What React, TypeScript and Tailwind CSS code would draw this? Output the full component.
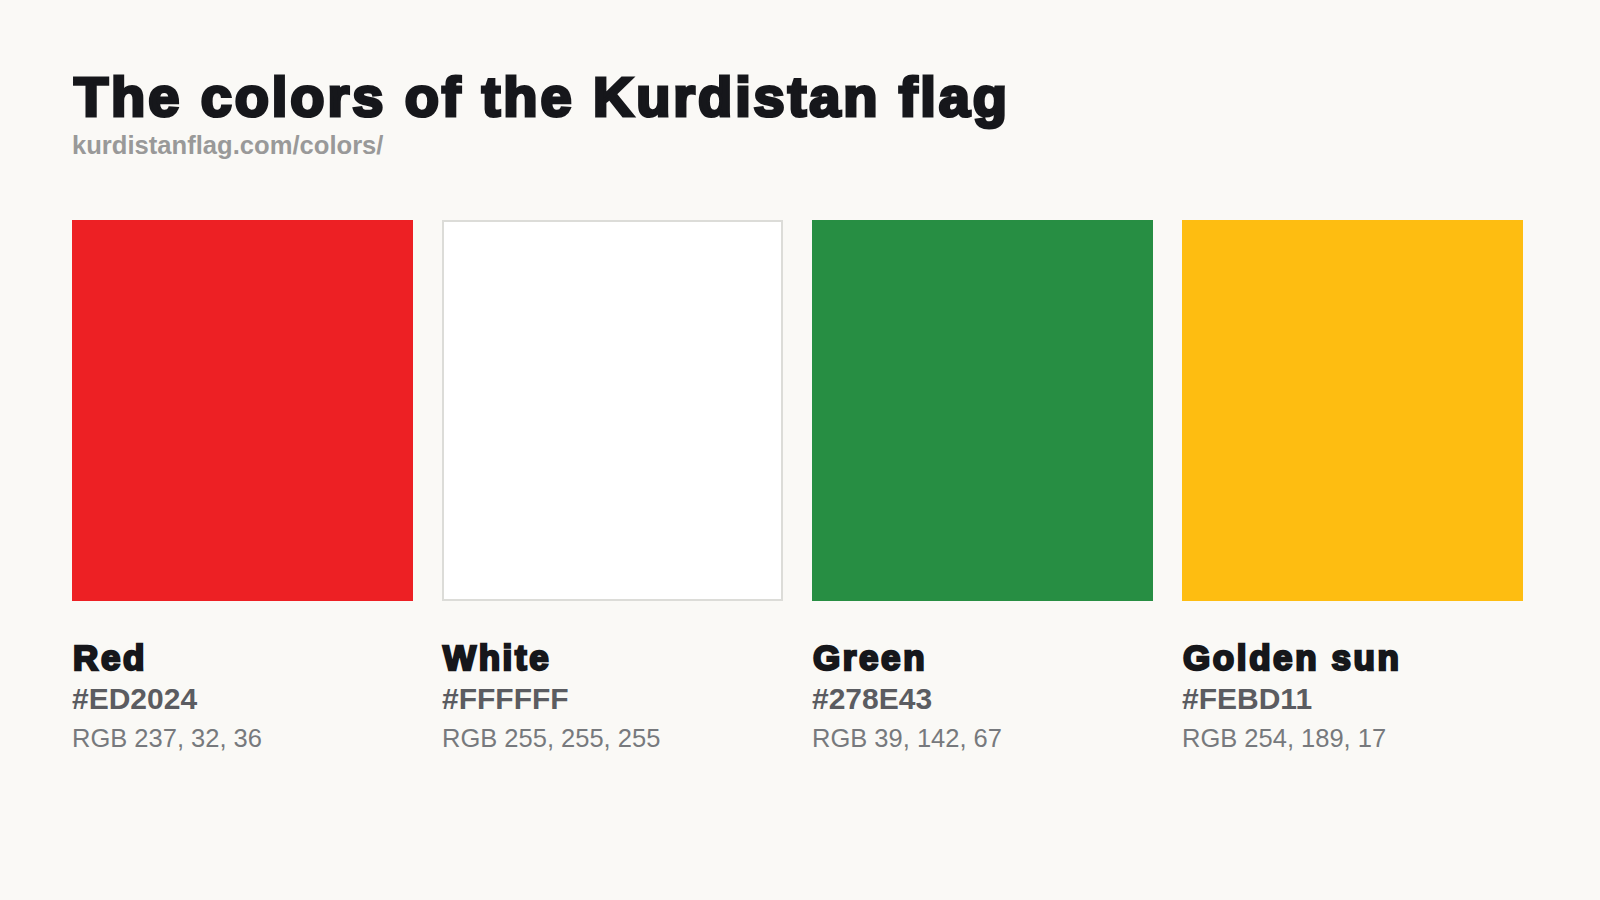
const FLAG_COLORS = [
  { name: 'Red', hex: '#ED2024', rgb: '237, 32, 36', swatch: 'bg-[#ed2024]' },
  { name: 'White', hex: '#FFFFFF', rgb: '255, 255, 255', swatch: 'bg-white border-2 border-[#dcdcd8]' },
  { name: 'Green', hex: '#278E43', rgb: '39, 142, 67', swatch: 'bg-[#278e43]' },
  { name: 'Golden sun', hex: '#FEBD11', rgb: '254, 189, 17', swatch: 'bg-[#febd11]' },
];

export default function App() {
  return (
    <div className="min-h-screen w-full bg-[#faf9f6] px-[72px] pt-[69px] font-['Liberation_Sans',Arial,sans-serif]">
      <h1 className="pl-[2px] text-[56px] leading-[56px] font-bold tracking-[2.9px] text-[#16171b] [-webkit-text-stroke:3.2px_#16171b]">
        The colors of the Kurdistan flag
      </h1>
      <p className="mt-[7px] text-[25.6px] leading-[26px] font-bold text-[#999999]">kurdistanflag.com/colors/</p>

      {/* swatches */}
      <div className="mt-[62px] flex gap-[29px]">
        {FLAG_COLORS.map(c => (
          <div key={c.name} className="w-[341px] shrink-0">
            <div className={`h-[381px] w-full ${c.swatch}`} />
            <h2 className="mt-[39px] pl-[1px] text-[35px] leading-[35px] font-bold tracking-[2.6px] text-[#16171b] [-webkit-text-stroke:2.4px_#16171b]">
              {c.name}
            </h2>
            <p className="mt-[9px] text-[30px] leading-[30px] font-bold text-[#5b5c61]">{c.hex}</p>
            <p className="mt-[11px] text-[25.5px] leading-[26px] text-[#77797d]">RGB {c.rgb}</p>
          </div>
        ))}
      </div>
    </div>
  );
}
